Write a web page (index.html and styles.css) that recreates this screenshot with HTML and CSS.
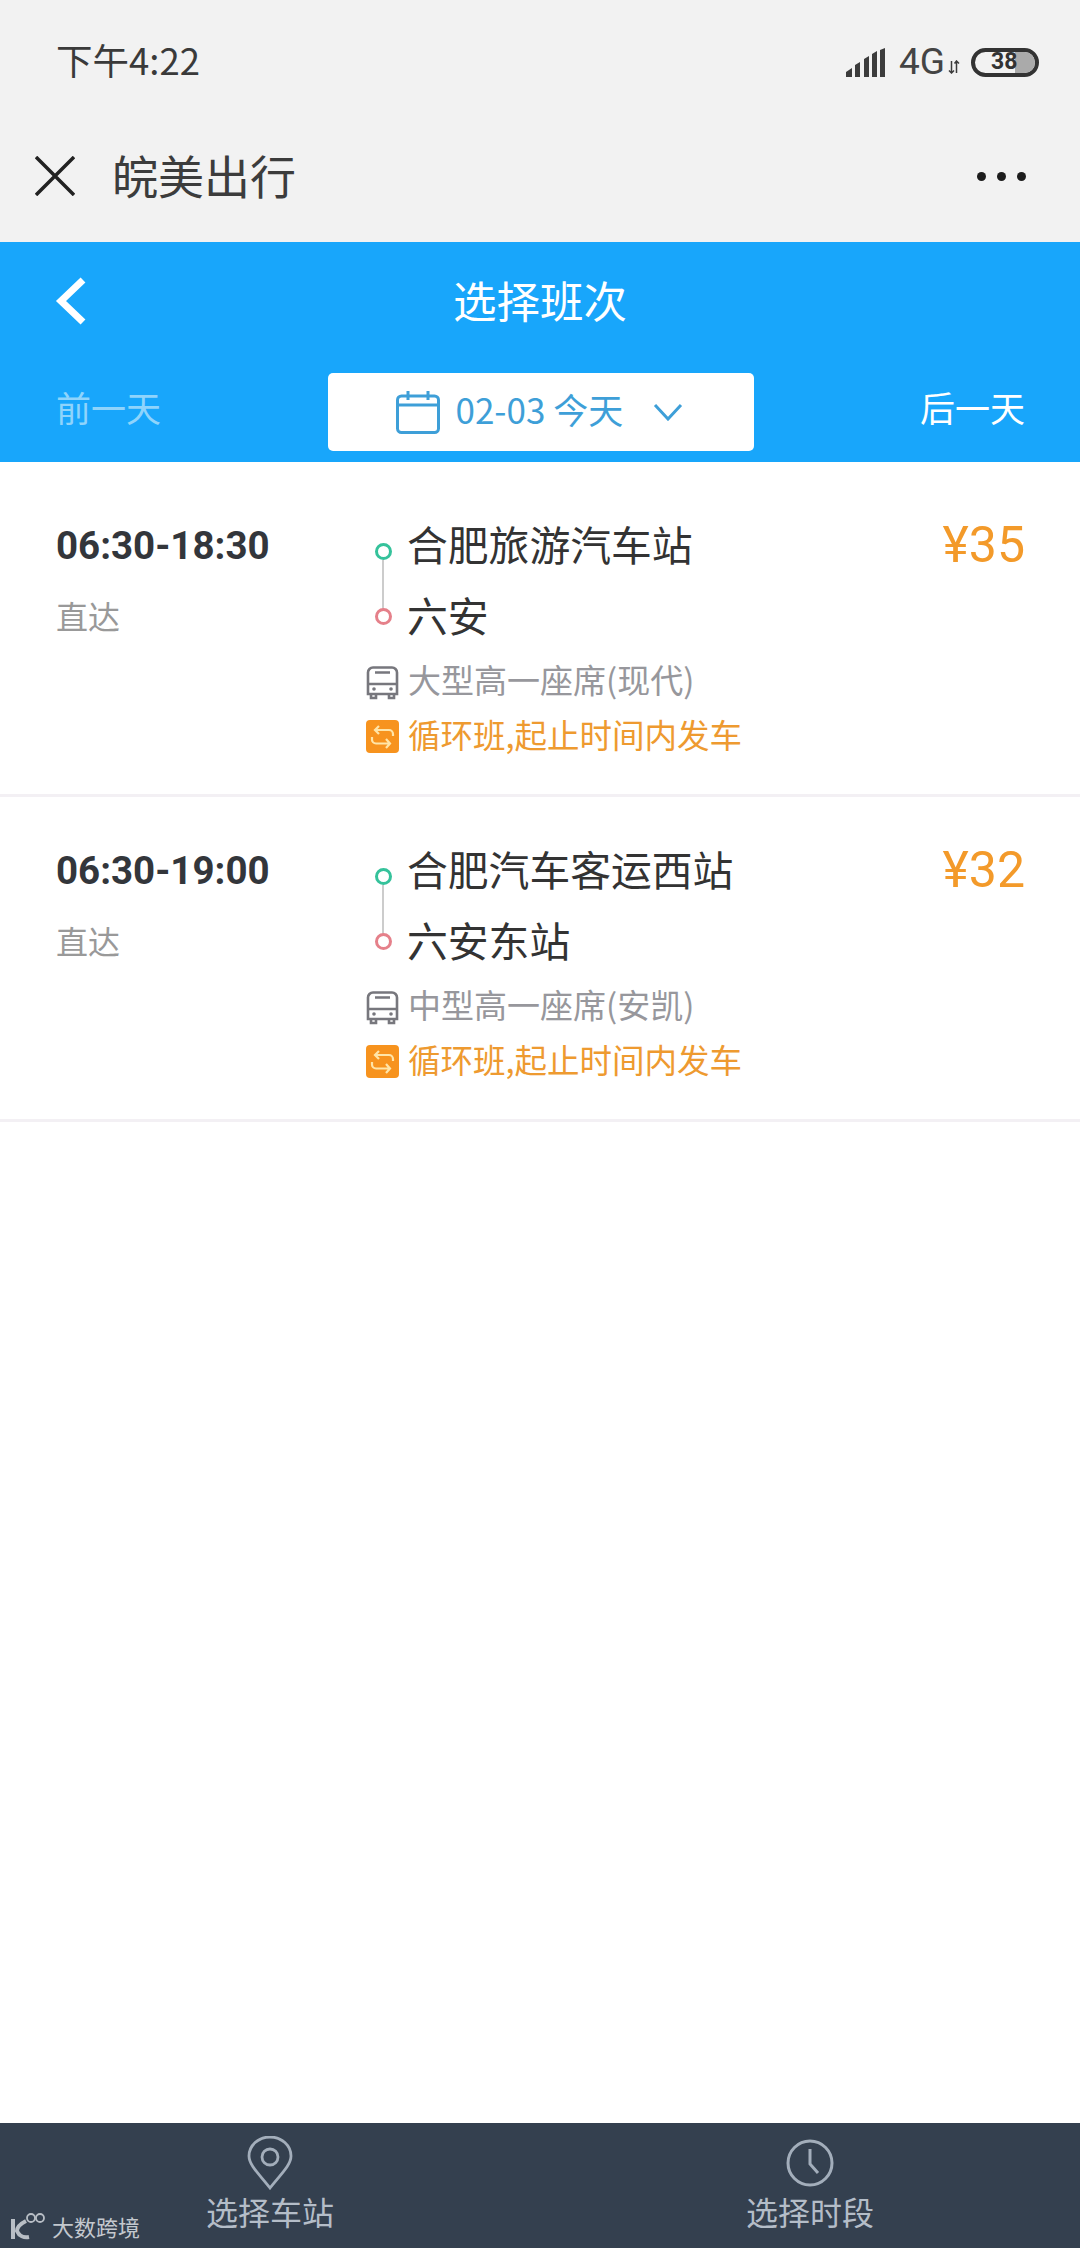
FILE: index.html
```html
<!DOCTYPE html>
<html lang="zh">
<head>
  <meta charset="utf-8">
  <title>选择班次</title>
  <link rel="stylesheet" href="styles.css">
</head>
<body>
  <div class="page">
    <div class="status-bar">
      <span class="clock">下午4:22</span>
      <div class="status-right">
        <svg class="signal" width="40" height="29" viewBox="0 0 40 29">
          <path d="M0 29v-5l6-4v9zM9 29V17l5-3v15zM18 29V11l5-3v21zM26 29V6l5-3v26zM34 29V2l5-2v29z" fill="#3c3c3c"/>
        </svg>
        <span class="net">4G</span>
        <svg class="updown" width="12" height="14" viewBox="0 0 12 14">
          <path d="M3.500 1v12M1 10.500l2.500 2.500 2.500-2.500M8.500 13V1M6.500 3.500L8.500 1l2.500 2.500" fill="none" stroke="#3c3c3c" stroke-width="1.500"/>
        </svg>
        <div class="battery">
          <div class="battery-fill"></div>
          <span class="battery-num">38</span>
        </div>
      </div>
    </div>

    <div class="nav-bar">
      <svg class="close" width="40" height="40" viewBox="0 0 40 40">
        <path d="M1 1l38 38M39 1L1 39" fill="none" stroke="#222" stroke-width="3.500"/>
      </svg>
      <span class="nav-title">皖美出行</span>
      <div class="dots"><i></i><i></i><i></i></div>
    </div>

    <div class="head">
      <div class="head-title">
        <svg class="back" width="34" height="48" viewBox="0 0 34 48">
          <path d="M29 3L7 24l22 21" fill="none" stroke="#fff" stroke-width="7"/>
        </svg>
        <span>选择班次</span>
      </div>
      <div class="date-row">
        <span class="day off">前一天</span>
        <div class="date-box">
          <svg width="44" height="44" viewBox="0 0 44 44">
            <rect x="1.500" y="6" width="41" height="36.500" rx="4" fill="none" stroke="#3e9fd8" stroke-width="3"/>
            <path d="M1.500 15h41M12 1v9M32 1v9" fill="none" stroke="#3e9fd8" stroke-width="3"/>
          </svg>
          <span class="date-text">02-03 今天</span>
          <svg class="chev" width="30" height="18" viewBox="0 0 30 18">
            <path d="M2 2l13 14L28 2" fill="none" stroke="#3e9fd8" stroke-width="3"/>
          </svg>
        </div>
        <span class="day">后一天</span>
      </div>
    </div>

    <div class="list">
      <div class="trip">
        <div class="trip-left">
          <div class="time">06:30-18:30</div>
          <div class="direct">直达</div>
        </div>
        <div class="trip-mid">
          <div class="stop first"><span class="dot green"></span><span>合肥旅游汽车站</span></div>
          <div class="stop"><span class="dot red"></span><span>六安</span></div>
          <div class="info">
            <svg class="ico" width="33" height="34" viewBox="0 0 33 34">
              <path d="M7 1.500h19a5 5 0 0 1 5 5V28H2V6.500a5 5 0 0 1 5-5zM2 18h29M9 6.500h15M5 28v4h5v-4M23 28v4h5v-4" fill="none" stroke="#77777d" stroke-width="2.600"/>
              <circle cx="8" cy="23" r="1.800" fill="#77777d"/><circle cx="25" cy="23" r="1.800" fill="#77777d"/>
            </svg>
            <span>大型高一座席(现代)</span>
          </div>
          <div class="info loop">
            <svg class="ico" width="33" height="33" viewBox="0 0 33 33">
              <rect width="33" height="33" rx="4" fill="#f7931e"/>
              <path d="M13 6l-4 4 4 4M9 10h14a4 4 0 0 1 4 4v2M20 19l4 4.500-4 4.500M24 23.500H10a4 4 0 0 1-4-4V17" fill="none" stroke="#ffe5a8" stroke-width="2.200"/>
            </svg>
            <span>循环班,起止时间内发车</span>
          </div>
        </div>
        <div class="price">¥35</div>
      </div>

      <div class="trip">
        <div class="trip-left">
          <div class="time">06:30-19:00</div>
          <div class="direct">直达</div>
        </div>
        <div class="trip-mid">
          <div class="stop first"><span class="dot green"></span><span>合肥汽车客运西站</span></div>
          <div class="stop"><span class="dot red"></span><span>六安东站</span></div>
          <div class="info">
            <svg class="ico" width="33" height="34" viewBox="0 0 33 34">
              <path d="M7 1.500h19a5 5 0 0 1 5 5V28H2V6.500a5 5 0 0 1 5-5zM2 18h29M9 6.500h15M5 28v4h5v-4M23 28v4h5v-4" fill="none" stroke="#77777d" stroke-width="2.600"/>
              <circle cx="8" cy="23" r="1.800" fill="#77777d"/><circle cx="25" cy="23" r="1.800" fill="#77777d"/>
            </svg>
            <span>中型高一座席(安凯)</span>
          </div>
          <div class="info loop">
            <svg class="ico" width="33" height="33" viewBox="0 0 33 33">
              <rect width="33" height="33" rx="4" fill="#f7931e"/>
              <path d="M13 6l-4 4 4 4M9 10h14a4 4 0 0 1 4 4v2M20 19l4 4.500-4 4.500M24 23.500H10a4 4 0 0 1-4-4V17" fill="none" stroke="#ffe5a8" stroke-width="2.200"/>
            </svg>
            <span>循环班,起止时间内发车</span>
          </div>
        </div>
        <div class="price">¥32</div>
      </div>
    </div>

    <div class="tabs">
      <div class="tab">
        <svg width="46" height="54" viewBox="0 0 46 54">
          <path d="M23 52C12 38 2 29 2 20a21 19 0 0 1 42 0c0 9-10 18-21 32z" fill="none" stroke="#a3aebb" stroke-width="2.800"/>
          <circle cx="23" cy="21" r="8" fill="none" stroke="#a3aebb" stroke-width="2.800"/>
        </svg>
        <span>选择车站</span>
      </div>
      <div class="tab">
        <svg width="48" height="54" viewBox="0 0 48 54">
          <circle cx="24" cy="27" r="22" fill="none" stroke="#a3aebb" stroke-width="3"/>
          <path d="M24 13v15l8 9" fill="none" stroke="#a3aebb" stroke-width="3"/>
        </svg>
        <span>选择时段</span>
      </div>
    </div>

    <div class="mark">
      <svg width="36" height="30" viewBox="0 0 36 30">
        <path d="M3 8v20M16 10c-6 3-9 7-9 10 2 5 7 7 12 6" fill="none" stroke="#b8bec5" stroke-width="4"/>
        <circle cx="21" cy="7" r="4" fill="none" stroke="#b8bec5" stroke-width="1.800"/>
        <circle cx="30" cy="7" r="4" fill="none" stroke="#b8bec5" stroke-width="1.800"/>
      </svg>
      <span>大数跨境</span>
    </div>
  </div>
</body>
</html>
```

FILE: styles.css
```css
* {
  box-sizing: border-box;
}

html,
body {
  margin: 0;
  padding: 0;
}

body {
  font-family: "Noto Sans CJK SC", "Noto Sans", sans-serif;
  color: #333;
}

.page {
  position: relative;
  display: flex;
  flex-direction: column;
  width: 1080px;
  height: 2248px;
  background: #fff;
  overflow: hidden;
}

/* top phone bars */
.status-bar {
  display: flex;
  justify-content: space-between;
  align-items: center;
  height: 110px;
  padding: 14px 41px 0 56px;
  background: #f2f2f2;
}

.clock {
  margin-bottom: 5px;
  font-size: 36.500px;
  line-height: 40px;
  color: #3a3a3a;
}

.status-right {
  display: flex;
  align-items: center;
}

.net {
  margin-left: 13px;
  font-family: "Roboto", sans-serif;
  font-size: 37px;
  line-height: 40px;
  color: #444;
}

.updown {
  margin: 10px 0 0 3px;
}

.battery {
  position: relative;
  width: 68px;
  height: 29px;
  margin-left: 11px;
  border: 4px solid #333;
  border-radius: 15px;
  overflow: hidden;
}

.battery-fill {
  position: absolute;
  top: 0;
  right: 0;
  width: 20px;
  height: 100%;
  background: #aaa;
}

.battery-num {
  position: absolute;
  top: -5px;
  left: 16px;
  font-family: "Roboto", sans-serif;
  font-size: 23px;
  line-height: 30px;
  font-weight: 700;
  color: #333;
}

.nav-bar {
  display: flex;
  align-items: center;
  height: 132px;
  padding: 0 54px 0 35px;
  background: #f2f2f2;
}

.nav-title {
  flex: 1;
  margin: 0 0 5px 37px;
  font-size: 46px;
  line-height: 60px;
  color: #3c3c3c;
}

.dots {
  display: flex;
  gap: 11px;
}

.dots i {
  width: 9px;
  height: 9px;
  border-radius: 50%;
  background: #1d1d1d;
}

/* blue header */
.head {
  background: #18a6fb;
  color: #fff;
}

.head-title {
  position: relative;
  display: flex;
  justify-content: center;
  align-items: center;
  height: 120px;
  padding-bottom: 5px;
  font-size: 43.500px;
}

.back {
  position: absolute;
  left: 54px;
  top: 35px;
}

.date-row {
  display: flex;
  justify-content: space-between;
  align-items: center;
  height: 100px;
  padding: 0 55px 0 56px;
  font-size: 35px;
}

.day {
  margin-bottom: 11px;
}

.day.off {
  color: #8fd4fb;
}

.date-box {
  display: flex;
  align-items: center;
  width: 426px;
  height: 78px;
  padding: 0 0 0 68px;
  background: #fff;
  border-radius: 5px;
  color: #3e9fd8;
  font-size: 35px;
}

.date-text {
  margin: 0 0 7px 16px;
}

.chev {
  margin-left: 30px;
}

/* trips */
.list {
  flex: 1;
  padding-top: 10px;
}

.trip {
  display: flex;
  height: 325px;
  padding: 38px 55px 0 56px;
  border-bottom: 3px solid #f3f0f4;
}

.trip-left {
  width: 310px;
}

.time {
  font-family: "Roboto", sans-serif;
  font-size: 38.500px;
  font-weight: 700;
  line-height: 72px;
  color: #33363b;
}

.direct {
  font-size: 32px;
  line-height: 66px;
  color: #999;
}

.trip-mid {
  flex: 1;
}

.stop {
  position: relative;
  display: flex;
  align-items: center;
  height: 71px;
  padding-bottom: 5px;
  font-size: 40.800px;
  color: #333;
}

.dot {
  flex: none;
  width: 17px;
  height: 17px;
  margin: 16px 15px 0 9px;
  background: #fff;
  border: 3px solid #35c29b;
  border-radius: 50%;
}

.dot.red {
  margin-top: 5px;
  border-color: #e5808a;
}

.stop.first::after {
  content: "";
  position: absolute;
  left: 16px;
  top: 50px;
  width: 2px;
  height: 50px;
  background: #ccc;
}

.info {
  display: flex;
  align-items: center;
  gap: 9px;
  height: 54px;
  font-size: 33px;
  color: #97979c;
}

.info.loop {
  color: #ee9a30;
  font-size: 32.500px;
}

.ico {
  flex: none;
  margin-top: 7px;
}

.price {
  margin-top: -1px;
  font-family: "Roboto", sans-serif;
  font-size: 50px;
  line-height: 72px;
  color: #f39a2a;
}

/* bottom tabs */
.tabs {
  display: flex;
  height: 125px;
  background: #34404f;
  color: #b4bdc8;
}

.tab {
  flex: 1;
  display: flex;
  flex-direction: column;
  align-items: center;
  padding-top: 13px;
  font-size: 32px;
}

.tab span {
  line-height: 42px;
}

.mark {
  position: absolute;
  left: 10px;
  bottom: 6px;
  display: flex;
  align-items: center;
  gap: 6px;
  font-size: 22px;
  color: #c3c8ce;
}
```
